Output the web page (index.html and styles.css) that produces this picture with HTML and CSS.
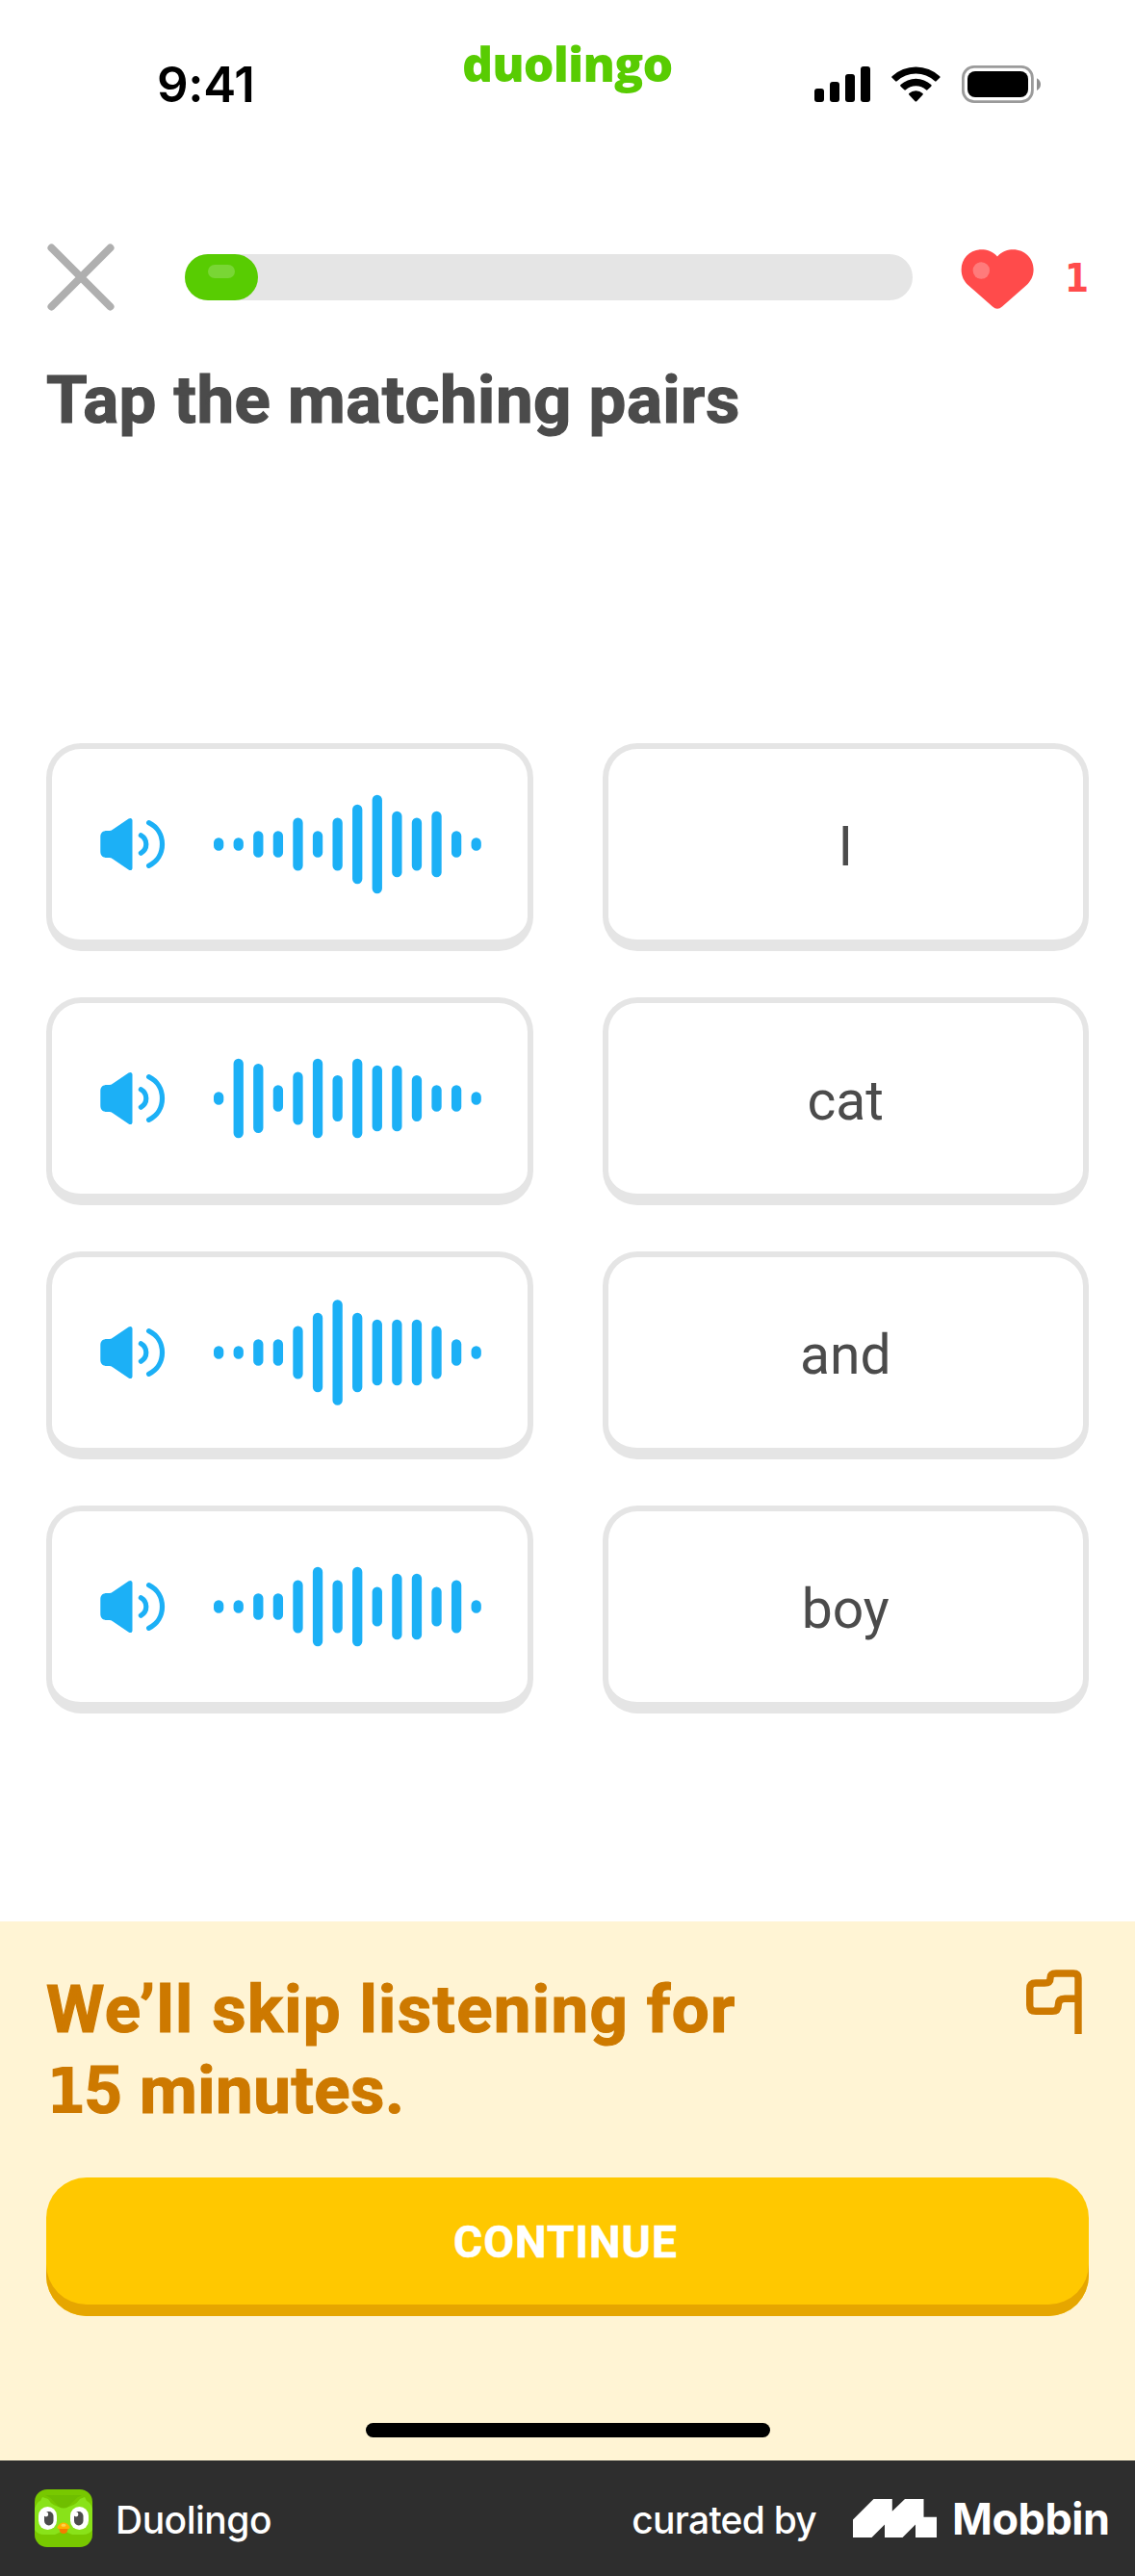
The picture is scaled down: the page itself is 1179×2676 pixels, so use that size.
FILE: index.html
```html
<!DOCTYPE html>
<html lang="en">
<head>
<meta charset="utf-8">
<title>Duolingo – Tap the matching pairs</title>
<link rel="stylesheet" href="styles.css">
</head>
<body>
<svg class="defs" aria-hidden="true">
  <symbol id="speaker" viewBox="0 0 68 56">
    <path d="M0.3 20.500C0.300 16 3 14 7 14H9.500Q11.500 14 13 12.800L29.600 1.500C31.600 0.200 33.500 1 33.500 3.300V52.700C33.500 55 31.600 55.800 29.600 54.500L13 43.200Q11.500 42 9.500 42H7C3 42 0.300 40 0.300 35.500Z" fill="#1cb0f6"/>
    <path d="M42.400 18.800Q47.800 22 47.800 28T42.400 37.200M50.600 5.700C59.500 10 64.500 18.500 64.500 28S59.500 46 50.600 50.300" fill="none" stroke="#1cb0f6" stroke-width="5.200" stroke-linecap="round"/>
  </symbol>
</svg>
<div class="screen">
  <header class="status">
    <div class="time">9:41</div>
    <div class="brand">duolingo</div>
    <svg class="indicators" width="236" height="40" viewBox="0 0 236 40">
      <rect x="0" y="24" width="10" height="14" rx="3"/>
      <rect x="16" y="17" width="10" height="21" rx="3"/>
      <rect x="32" y="9" width="10" height="29" rx="3"/>
      <rect x="48" y="1" width="10" height="37" rx="3"/>
      <path d="M80.600 11.200A36.400 36.400 0 0 1 130.200 11.200Q131 12 130.200 12.800L126.600 16.300Q125.900 17 125.100 16.300A29 29 0 0 0 85.700 16.300Q84.900 17 84.200 16.300L80.600 12.800Q79.800 12 80.600 11.200Z"/>
      <path d="M89.500 20.100A23.200 23.200 0 0 1 121.300 20.100Q122.100 20.900 121.300 21.700L117.500 25.300Q116.700 26 115.900 25.300A15.500 15.500 0 0 0 94.900 25.300Q94.100 26 93.300 25.300L89.500 21.700Q88.700 20.900 89.500 20.100Z"/>
      <path d="M98.300 29A10.500 10.500 0 0 1 112.500 29Q113.300 29.800 112.500 30.600L106.200 37.200Q105.400 38 104.600 37.200L98.300 30.600Q97.500 29.800 98.300 29Z"/>
      <rect x="154.400" y="1.400" width="72" height="36.200" rx="11.500" fill="none" stroke="#9b9b9b" stroke-width="2.800"/>
      <rect x="159" y="6" width="63" height="27" rx="8"/>
      <path d="M231 13.200Q235 15.500 235 19.600T231 26Z" fill="#8f8f8f"/>
    </svg>
  </header>

  <div class="toolbar">
    <svg class="close" width="72" height="72" viewBox="0 0 72 72"><path d="M5.500 5.500L66.500 66.500M66.500 5.500L5.500 66.500" stroke="#afafaf" stroke-width="8" stroke-linecap="round"/></svg>
    <div class="progress"><div class="progress-fill"><div class="shine"></div></div></div>
    <svg class="heart" width="76" height="64" viewBox="0 0 76 64">
      <path d="M38 8.500C33 3 27 1.300 21.500 1.300C9.500 1.300 0.600 10.500 0.600 22C0.600 29 3.500 34.500 8 38.500L33 60.500Q38 65 43 60.500L68 38.500C72.500 34.500 75.600 29 75.600 22C75.600 10.500 66.500 1.300 54.500 1.300C49 1.300 43 3 38 8.500Z" fill="#ff4b4b"/>
      <circle cx="21.300" cy="23" r="8.700" fill="#ff7b7b"/>
    </svg>
    <div class="lives">1</div>
  </div>

  <h1 class="title">Tap the matching pairs</h1>

  <main class="pairs">
    <button class="card audio">
      <svg class="speaker" width="68" height="56"><use href="#speaker"/></svg>
      <svg class="wave" width="278" height="112" viewBox="0 0 278 112"><path d="M5.150 54.300V57.700M25.730 54.300V57.700M46.310 47.300V64.700M66.890 47.300V64.700M87.470 33.700V78.300M108.050 47.300V64.700M128.630 33.700V78.300M149.210 20V92M169.790 9.900V102.100M190.370 26.800V85.200M210.950 33.700V78.300M231.530 26.800V85.200M252.110 47.300V64.700M272.690 54.300V57.700"/></svg>
    </button>
    <button class="card">I</button>
    <button class="card audio">
      <svg class="speaker" width="68" height="56"><use href="#speaker"/></svg>
      <svg class="wave" width="278" height="112" viewBox="0 0 278 112"><path d="M5.150 54.300V57.700M25.730 20V92M46.310 25.200V86.800M66.890 47.300V64.700M87.470 33.700V78.300M108.050 20V92M128.630 37.200V74.800M149.210 20V92M169.790 26.800V85.200M190.370 26.800V85.200M210.950 37.200V74.800M231.530 47.300V64.700M252.110 47.300V64.700M272.690 54.300V57.700"/></svg>
    </button>
    <button class="card">cat</button>
    <button class="card audio">
      <svg class="speaker" width="68" height="56"><use href="#speaker"/></svg>
      <svg class="wave" width="278" height="112" viewBox="0 0 278 112"><path d="M5.150 54.300V57.700M25.730 54.300V57.700M46.310 47.300V64.700M66.890 47.300V64.700M87.470 33.700V78.300M108.050 20V92M128.630 6.300V105.700M149.210 20V92M169.790 26.800V85.200M190.370 26.800V85.200M210.950 26.800V85.200M231.530 33.700V78.300M252.110 47.300V64.700M272.690 54.300V57.700"/></svg>
    </button>
    <button class="card">and</button>
    <button class="card audio">
      <svg class="speaker" width="68" height="56"><use href="#speaker"/></svg>
      <svg class="wave" width="278" height="112" viewBox="0 0 278 112"><path d="M5.150 54.300V57.700M25.730 54.300V57.700M46.310 47.300V64.700M66.890 47.300V64.700M87.470 33.700V78.300M108.050 20V92M128.630 33.700V78.300M149.210 20V92M169.790 40.600V71.400M190.370 26.800V85.200M210.950 26.800V85.200M231.530 40.600V71.400M252.110 33.700V78.300M272.690 54.300V57.700"/></svg>
    </button>
    <button class="card">boy</button>
  </main>

  <section class="sheet">
    <div class="sheet-head">
      <p class="message"><span class="line1">We’ll skip listening for</span><br><span class="line2"><span class="one">1</span>5 minutes.</span></p>
      <svg class="flag" width="58" height="67" viewBox="0 0 58 67"><path d="M54 67V9Q54 4 49 4H31Q25 4 25 9Q25 14 19 14H10Q3.700 14 3.700 20V37Q3.700 43.300 10 43.300H27Q33.300 43.300 33.300 37Q33.300 30.300 40 30.300H54" fill="none" stroke="#cd7900" stroke-width="7.400"/></svg>
    </div>
    <button class="continue">CONTINUE</button>
    <div class="home"></div>
  </section>

  <footer class="credit">
    <svg class="app" width="60" height="60" viewBox="0 0 60 60">
      <rect width="60" height="60" rx="13" fill="#78c800"/>
      <path d="M0 20Q3 12 6 12L8 8L14 10Q18 18 30 19Q42 18 47 10L52 8L54 12Q58 13 60 20V42Q57 47 50 47H39L30 43L21 47H10Q3 47 0 42Z" fill="#89e219"/>
      <path d="M11 6C18 9 21 14 25 18Q30 21 35 18C39 14 42 9 49 6Z" fill="#6fbe00"/>
      <rect x="4" y="18" width="19" height="24" rx="9.500" fill="#fff"/>
      <rect x="37" y="18" width="19" height="24" rx="9.500" fill="#fff"/>
      <rect x="10" y="23" width="9.500" height="14.500" rx="4.700" fill="#4b4b4b"/>
      <rect x="41" y="23" width="9.500" height="14.500" rx="4.700" fill="#4b4b4b"/>
      <circle cx="11.800" cy="26" r="2.400" fill="#fff"/><circle cx="43" cy="26" r="2.400" fill="#fff"/>
      <path d="M25 40H35L33.500 44.500Q30 47.500 26.500 44.500Z" fill="#f57c00"/>
      <path d="M23.500 39Q26 34.500 30 34.500T36.500 39Q37 41 34 41H26Q23 41 23.500 39Z" fill="#ffb100"/>
      <ellipse cx="30" cy="37.300" rx="2.500" ry="1.500" fill="#ffd34d"/>
    </svg>
    <span class="app-name">Duolingo</span>
    <span class="curated">curated by</span>
    <svg class="mark" width="87" height="40" viewBox="0 0 87 40"><path d="M0 21.500L21.500 0H40.800V12.800L54 0H73.500V18.800H87V40H65V26.500L51.500 40H33V26.500L19.500 40H0Z" fill="#fff"/></svg>
    <span class="mobbin">Mobbin</span>
  </footer>
</div>
</body>
</html>
```
FILE: styles.css
```css
* { box-sizing: border-box; }
body { margin: 0; background: #fff; }
button { font: inherit; }
svg { display: block; flex: none; }
.defs { position: absolute; width: 0; height: 0; }

.screen {
  width: 1179px;
  height: 2676px;
  display: flex;
  flex-direction: column;
  overflow: hidden;
  background: #fff;
  font-family: Roboto, "Liberation Sans", sans-serif;
  color: #4b4b4b;
}

.status {
  height: 252px;
  display: flex;
  align-items: flex-start;
  color: #000;
}
.time {
  width: 480px;
  padding: 58px 0 0 163px;
  font: 600 51px/60px Inter, sans-serif;
  letter-spacing: -0.3px;
}
.brand {
  width: 366px;
  padding-top: 36px;
  font: 800 50px/60px "Open Sans", sans-serif;
  letter-spacing: -0.9px;
  color: #58cc02;
}
.indicators { margin-top: 68px; }

.toolbar {
  height: 72px;
  padding: 0 48px;
  display: flex;
  align-items: center;
}
.progress {
  width: 756px;
  height: 48px;
  margin-left: 72px;
  border-radius: 24px;
  background: #e5e5e5;
}
.progress-fill {
  width: 76px;
  height: 48px;
  padding: 11px 24px;
  border-radius: 24px;
  background: #58cc02;
}
.shine { height: 14px; border-radius: 7px; background: #79d635; }
.heart { margin: 4px 0 0 50px; }
.lives {
  width: 57px;
  text-align: right;
  font: 700 40px/60px "DejaVu Sans Condensed", "DejaVu Sans", sans-serif;
  font-stretch: condensed;
  padding-top: 1px;
  color: #ff4b4b;
}

.title {
  margin: 50px 48px 0;
  height: 84px;
  font-size: 69px;
  line-height: 84px;
  font-weight: 700;
  letter-spacing: 0.5px;
  -webkit-text-stroke: 1.2px #4b4b4b;
  white-space: nowrap;
}

.pairs {
  margin: 314px 48px 0;
  display: grid;
  grid-template-columns: 1fr 1fr;
  grid-auto-rows: 216px;
  gap: 48px 72px;
}
.card {
  display: flex;
  align-items: center;
  justify-content: center;
  padding: 4px 0 0;
  border: 6px solid #e5e5e5;
  border-bottom-width: 12px;
  border-radius: 36px;
  background: #fff;
  color: #4b4b4b;
  font-size: 57px;
  line-height: 1;
}
.card.audio { justify-content: flex-start; padding: 0 0 0 50px; }
.wave { margin-left: 50px; }
.wave path { stroke: #1cb0f6; stroke-width: 10.300px; stroke-linecap: round; }

.sheet {
  margin-top: auto;
  height: 560px;
  padding: 50px 48px 0;
  background: #fff4d4;
}
.sheet-head { height: 216px; display: flex; justify-content: space-between; }
.message {
  margin: 0;
  font-size: 69px;
  line-height: 84px;
  font-weight: 700;
  white-space: nowrap;
  color: #cd7900;
  -webkit-text-stroke: 1.2px #cd7900;
}
.line1 { letter-spacing: 1.35px; }
.line2 { letter-spacing: 0.5px; }
.one {
  font-family: "DejaVu Sans Condensed", "DejaVu Sans", sans-serif;
  font-stretch: condensed;
  font-size: 66px;
  line-height: 1;
  letter-spacing: -2px;
  -webkit-text-stroke: 0;
}
.flag { margin: 0 7px 0 0; }
.continue {
  display: block;
  width: 100%;
  height: 144px;
  padding: 2px 4px 12px 0;
  border: 0;
  border-radius: 42px;
  background: #ffc800;
  box-shadow: inset 0 -12px #e6a600;
  color: #fff;
  font-size: 46px;
  line-height: 130px;
  font-weight: 700;
  letter-spacing: 1.1px;
  -webkit-text-stroke: 0.6px #fff;
}
.home { width: 420px; height: 15px; margin: 111px auto 0; border-radius: 8px; background: #000; }

.credit {
  height: 120px;
  padding: 0 28px 0 36px;
  display: flex;
  align-items: center;
  background: #2e2e2e;
  color: #fff;
  font-family: Inter, sans-serif;
  line-height: 60px;
  white-space: nowrap;
}
.app-name { margin-left: 24px; font-size: 39px; font-weight: 500; letter-spacing: -0.5px; padding-top: 4px; }
.curated { margin-left: auto; font-size: 39px; font-weight: 500; letter-spacing: -0.75px; padding-top: 4px; }
.mark { margin-left: 38px; }
.mobbin { margin-left: 16px; width: 162px; font-size: 45px; font-weight: 700; letter-spacing: -0.5px; padding-top: 2px; }
```
